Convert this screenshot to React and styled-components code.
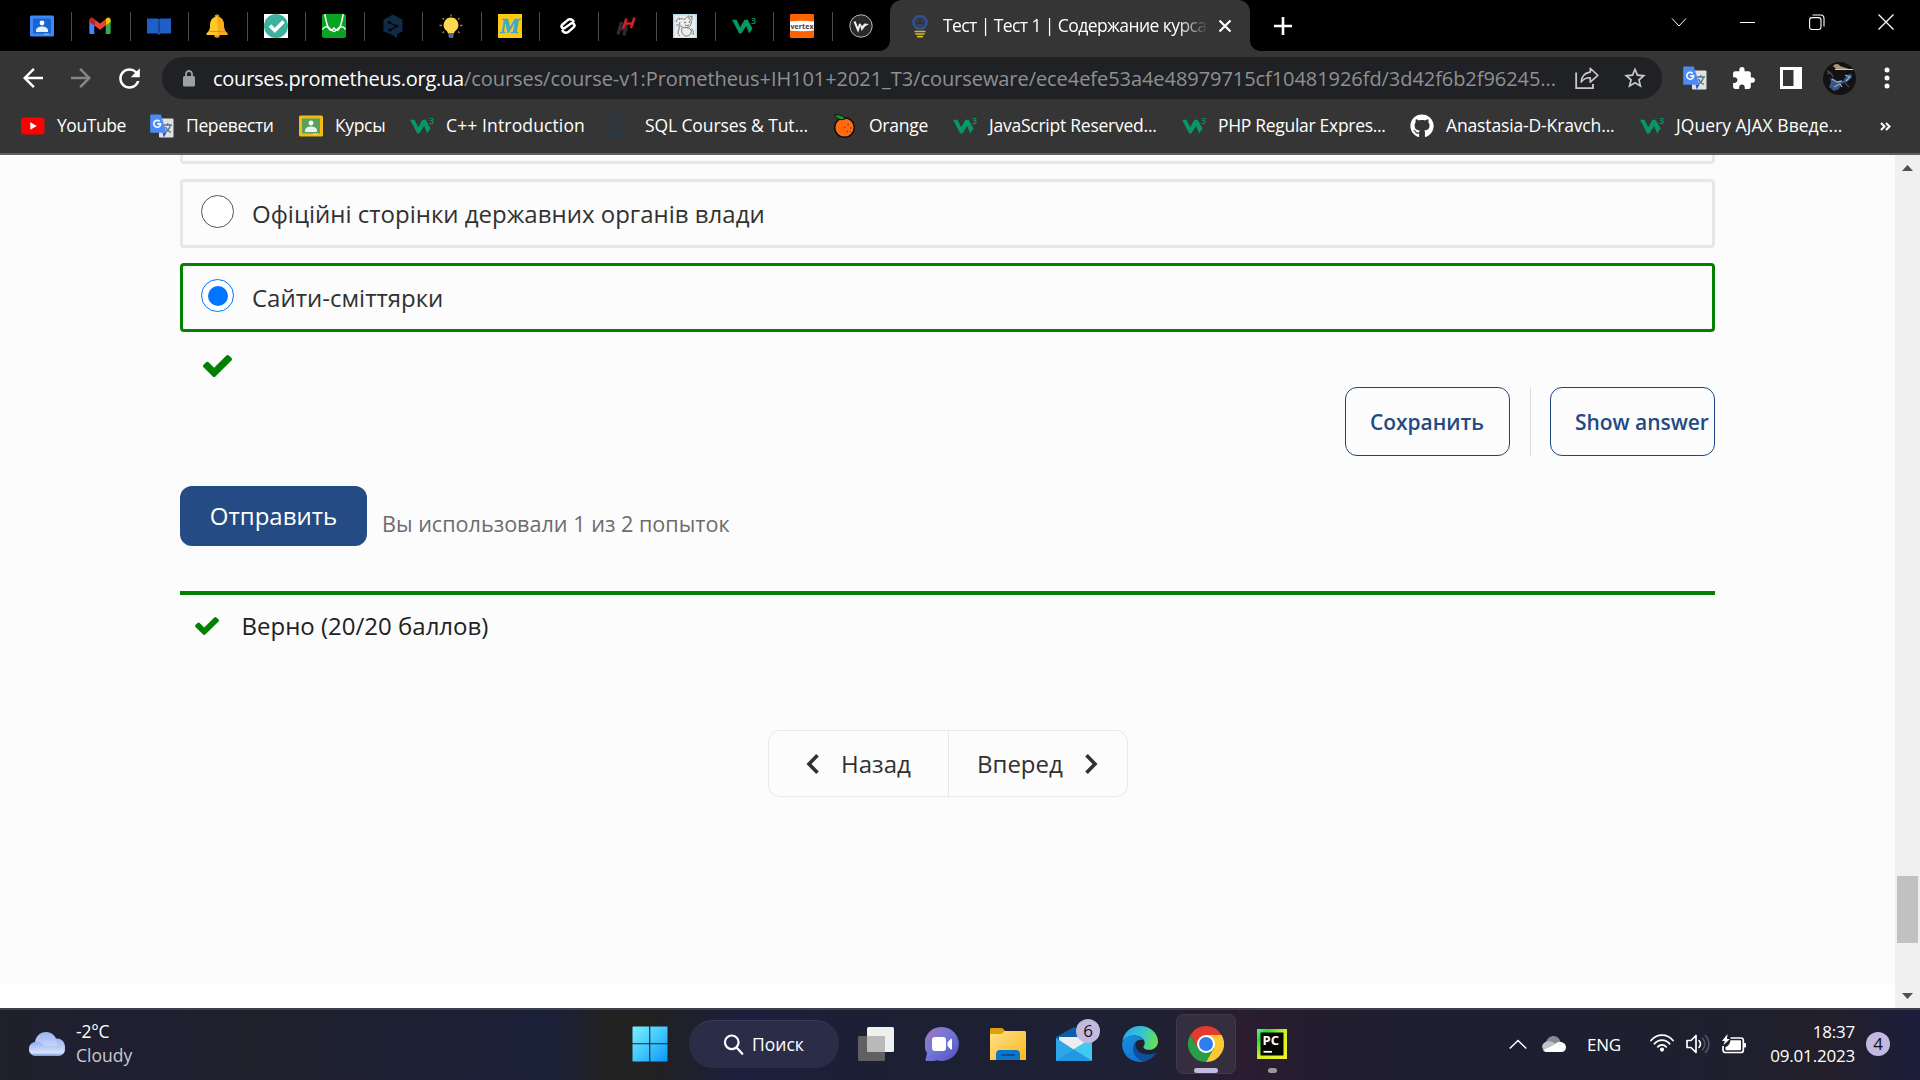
import React from "react";
import styled, { createGlobalStyle } from "styled-components";
import {
  MdArrowBack,
  MdArrowForward,
  MdRefresh,
  MdStarBorder,
  MdExtension,
} from "react-icons/md";
import { FaGithub } from "react-icons/fa";

const Global = createGlobalStyle`
  * { box-sizing: border-box; }
  html, body { margin: 0; padding: 0; background: #fff; }
  body { width: 1920px; height: 1080px; overflow: hidden; }
  svg { display: block; flex: none; }
`;

const Screen = styled.div`
  width: 1920px;
  height: 1080px;
  display: flex;
  flex-direction: column;
  font-family: "Open Sans", "Noto Sans", sans-serif;
`;

/* ---------- browser chrome ---------- */
const TabStrip = styled.div`
  height: 51px;
  background: #000;
  display: flex;
  padding-left: 12.5px;
`;
const PinnedTab = styled.div`
  width: 58.5px;
  height: 51px;
  display: flex;
  align-items: center;
  justify-content: center;
  position: relative;
  &::after {
    content: "";
    position: absolute;
    right: -1px;
    top: 12px;
    width: 1px;
    height: 29px;
    background: ${(p) => (p.$last ? "transparent" : "#4c4c4c")};
  }
`;
const ActiveTab = styled.div`
  width: 360px;
  height: 51px;
  background: #353535;
  border-radius: 12px 12px 0 0;
  display: flex;
  align-items: center;
  padding-left: 18px;
  position: relative;
  &::before, &::after {
    content: "";
    position: absolute;
    bottom: 0;
    width: 10px;
    height: 10px;
  }
  &::before { left: -10px; background: radial-gradient(circle at 0 0, #000 9.5px, #353535 10px); }
  &::after { right: -10px; background: radial-gradient(circle at 100% 0, #000 9.5px, #353535 10px); }
`;
const TabTitle = styled.div`
  margin-left: 11px;
  padding-bottom: 1px;
  width: 263px;
  overflow: hidden;
  white-space: nowrap;
  color: #fff;
  font-size: 17.5px;
  letter-spacing: -0.58px;
  line-height: 24px;
  mask-image: linear-gradient(90deg, #000 89%, transparent 101%);
`;
const TabClose = styled.div`
  margin-left: 12px;
`;
const NewTab = styled.div`
  width: 65px;
  display: flex;
  align-items: center;
  justify-content: center;
`;
const WindowControls = styled.div`
  margin-left: auto;
  height: 43px;
  display: flex;
`;
const WindowButton = styled.div`
  width: 69px;
  display: flex;
  align-items: center;
  justify-content: center;
`;

const Toolbar = styled.div`
  height: 54px;
  background: #353535;
  display: flex;
  align-items: center;
  padding-left: 9px;
`;
const NavButton = styled.div`
  width: 48px;
  display: flex;
  justify-content: center;
  color: ${(p) => (p.$dim ? "#868686" : "#fff")};
`;
const Omnibox = styled.div`
  margin-left: 9px;
  width: 1500px;
  height: 42px;
  border-radius: 21px;
  background: #202124;
  display: flex;
  align-items: center;
  padding: 0 3px 0 21px;
  color: #9aa0a6;
`;
const Url = styled.div`
  margin-left: 18px;
  padding-top: 2px;
  flex: 1;
  min-width: 0;
  font-size: 20px;
  line-height: 28px;
  white-space: nowrap;
  color: #8f9093;
  letter-spacing: -0.06px;
`;
const Domain = styled.span`
  color: #fff;
  letter-spacing: -0.25px;
`;
const OmniIcon = styled.div`
  width: 48px;
  flex: none;
  display: flex;
  justify-content: center;
  color: #c7c7c7;
`;
const ToolIcon = styled.div`
  width: 48px;
  display: flex;
  justify-content: center;
  color: #fff;
`;
const Extensions = styled.div`
  display: flex;
  align-items: center;
  margin-left: 9px;
`;

const Bookmarks = styled.div`
  height: 50px;
  background: #353535;
  border-bottom: 2px solid #5f5f5f;
  padding: 0 0 6px 21px;
  display: flex;
  align-items: center;
`;
const Bookmark = styled.div`
  width: ${(p) => p.$w}px;
  display: flex;
  align-items: center;
  gap: 12px;
  color: #fff;
  font-size: 17.5px;
  line-height: 24px;
  white-space: nowrap;
  letter-spacing: ${(p) => p.$ls}px;
`;
const BookmarkLabel = styled.span`
  padding-bottom: 2px;
`;

/* ---------- page ---------- */
const Viewport = styled.div`
  height: 853px;
  display: flex;
`;
const Page = styled.div`
  width: 1895px;
  height: 830px;
  background: #fcfcfc;
  padding-left: 180px;
  overflow: hidden;
`;
const Problem = styled.div`
  width: 1535px;
  display: flex;
  flex-direction: column;
`;
const Option = styled.div`
  height: 69px;
  flex: none;
  margin-bottom: 15px;
  border: 3px solid ${(p) => (p.$correct ? "#008100" : "#e7e7e7")};
  border-radius: 4px;
  display: flex;
  align-items: center;
  padding-left: 18px;
  font-size: 24px;
  line-height: 36px;
  color: #313131;
`;
const ClippedOption = styled.div`
  height: 9px;
  flex: none;
  margin-bottom: 15px;
  border: 3px solid #e7e7e7;
  border-top: 0;
  border-radius: 0 0 4px 4px;
`;
const Radio = styled.span`
  width: 33px;
  height: 33px;
  border-radius: 50%;
  border: 1px solid ${(p) => (p.$on ? "#0075ff" : "#555")};
  background: #fff;
  margin: 0 18px 4px 0;
  display: flex;
  align-items: center;
  justify-content: center;
  &::after {
    content: "";
    width: 20px;
    height: 20px;
    border-radius: 50%;
    background: ${(p) => (p.$on ? "#0075ff" : "transparent")};
  }
`;
const Mark = styled.div`
  height: 40px;
  padding: 8px 0 0 23px;
`;
const Actions = styled.div`
  display: flex;
  justify-content: flex-end;
  height: 69px;
`;
const OutlineButton = styled.div`
  width: 165px;
  height: 69px;
  border: 1px solid #1c4580;
  border-radius: 12px;
  padding-left: 24px;
  display: flex;
  align-items: center;
  font-size: 21px;
  font-weight: 600;
  color: #234a83;
  white-space: nowrap;
  letter-spacing: -0.05px;
`;
const ActionDivider = styled.div`
  width: 1px;
  margin: 0 19px 0 20px;
  background: #dcdcdc;
`;
const SubmitRow = styled.div`
  margin-top: 30px;
  display: flex;
  height: 60px;
`;
const Submit = styled.div`
  width: 187px;
  height: 60px;
  border-radius: 12px;
  background: #244b83;
  color: #fff;
  font-size: 24px;
  line-height: 59px;
  text-align: center;
`;
const Attempts = styled.div`
  padding: 22px 0 0 15px;
  font-size: 21.6px;
  line-height: 31px;
  color: #6c6c6c;
`;
const Notice = styled.div`
  margin-top: 45px;
  border-top: 4px solid #008100;
  padding: 5px 0 0 15px;
  height: 61px;
  display: flex;
  align-items: center;
  gap: 22.5px;
  font-size: 24px;
  line-height: 36px;
  color: #222;
`;
const Pager = styled.div`
  margin: 78px 0 0 588px;
  width: 360px;
  height: 67px;
  display: flex;
  border: 1px solid #e7e7e7;
  border-radius: 12px;
  color: #313131;
  font-size: 24px;
`;
const PagerButton = styled.div`
  width: 179px;
  display: flex;
  align-items: center;
  padding-left: ${(p) => p.$pad}px;
  gap: 22px;
  & + & { border-left: 1px solid #e7e7e7; }
`;
const Scrollbar = styled.div`
  width: 25px;
  height: 853px;
  background: #f0f0f0;
  display: flex;
  flex-direction: column;
  align-items: center;
  padding: 10px 0 9px;
`;
const Thumb = styled.div`
  width: 21px;
  height: 67px;
  background: #c1c1c1;
  margin: 705px 0 auto;
`;

/* ---------- taskbar ---------- */
const Taskbar = styled.div`
  height: 72px;
  border-top: 2px solid #3e3f4b;
  padding-bottom: 2px;
  display: flex;
  align-items: center;
  color: #fff;
  background: linear-gradient(90deg, #20202b 0, #1f1f33 130px, #1f202c 250px, #1c2036 480px, #1a2038 550px, #222222 605px, #212122 655px, #1b1f3c 740px, #1c2033 900px, #1f2033 1150px, #2b1c31 1245px, #211d2f 1330px, #1d1f31 1450px, #1e1f2f 1700px, #231f2b 1830px, #1c1d3b 1920px);
`;
const Weather = styled.div`
  width: 620px;
  padding-left: 29px;
  display: flex;
  align-items: center;
  gap: 11px;
  font-size: 17.5px;
  line-height: 24px;
`;
const Muted = styled.div`
  color: #c9c9cf;
  letter-spacing: 0;
`;
const WeatherText = styled.div`
  letter-spacing: -0.2px;
  padding-bottom: 3px;
`;
const AppTile = styled.div`
  width: 60px;
  height: 60px;
  margin-right: 6px;
  border-radius: 7px;
  border: 1px solid ${(p) => (p.$active ? "#403b4b" : "transparent")};
  background: ${(p) => (p.$active ? "#352e3e" : "transparent")};
  display: flex;
  align-items: center;
  justify-content: center;
  position: relative;
`;
const Indicator = styled.span`
  position: absolute;
  left: calc(50% - ${(p) => p.$w / 2}px);
  bottom: 0;
  width: ${(p) => p.$w}px;
  height: 5px;
  border-radius: 3px;
  background: ${(p) => p.$c};
`;
const Badge = styled.span`
  width: 24px;
  height: 24px;
  border-radius: 50%;
  background: #c3b9e0;
  color: #111;
  font-size: 17px;
  line-height: 23px;
  text-align: center;
`;
const MailBadge = styled(Badge)`
  position: absolute;
  left: 31px;
  top: 4px;
`;
const Search = styled.div`
  width: 150px;
  height: 48px;
  margin: 0 7px 0 3px;
  border-radius: 24px;
  background: #2b2d48;
  border-top: 1px solid #3a3b54;
  display: flex;
  align-items: center;
  padding: 0 0 1px 34px;
  gap: 8px;
  font-size: 17.5px;
`;
const Tray = styled.div`
  margin-left: auto;
  padding-right: 30px;
  display: flex;
  align-items: center;
  font-size: 17px;
`;
const Language = styled.div`
  width: 63px;
  margin-left: 21px;
  letter-spacing: -0.2px;
`;
const TrayGroup = styled.div`
  display: flex;
  gap: 12px;
  width: 96px;
`;
const OneDriveSlot = styled.div`
  margin-left: 15px;
`;
const Clock = styled.div`
  width: 109px;
  text-align: right;
  line-height: 24px;
  letter-spacing: -0.2px;
  margin-right: 11px;
`;

/* ---------- icons ---------- */
const Svg = ({ s = 24, children, box = "0 0 24 24", w, h }) => (
  <svg width={w || s} height={h || s} viewBox={box} fill="none">
    {children}
  </svg>
);
const Classroom = ({ frame, board }) => (
  <Svg>
    <rect y="1.5" width="24" height="21" rx="1.5" fill={frame} />
    <rect x="3" y="4.5" width="18" height="15" fill={board} />
    <circle cx="12" cy="9" r="2.4" fill="#fff" />
    <path d="M6 18v-1.500c0-2.500 3-4 6-4s6 1.500 6 4V18z" fill="#e9f0f5" />
    <rect x="14" y="19.500" width="5" height="1.500" fill="#fff" opacity=".35" />
  </Svg>
);
const Gmail = () => (
  <Svg>
    <path d="M1.300 6v12.500c0 1 .6 1.500 1.500 1.500H6.300V10z" fill="#4285f4" />
    <path d="M17.700 10v10h3.600c.9 0 1.400-.6 1.400-1.500V6z" fill="#34a853" />
    <path d="M17.700 5.200V11.500l5-3.800V6c0-2.200-2.400-3.300-4-2z" fill="#fbbc04" />
    <path d="M6.300 11.500V5.200L12 9.500l5.700-4.300v6.300L12 15.800z" fill="#ea4335" />
    <path d="M1.300 6v1.700l5 3.800V5.200L5.300 4C3.600 2.800 1.300 3.800 1.300 6z" fill="#c5221f" />
  </Svg>
);
const Book = () => (
  <Svg>
    <path d="M0 4.500h9.500c1.200 0 2.100.5 2.500 1.200.4-.7 1.300-1.200 2.500-1.200H24v15h-9.500c-1 0-1.500.3-2 1h-1c-.5-.7-1-1-2-1H0z" fill="#1f5fc8" />
    <path d="M12 6.500v12" stroke="#0f2f66" strokeWidth="1" />
  </Svg>
);
const Bell = () => (
  <Svg>
    <circle cx="12" cy="21" r="2.800" fill="#f79d10" />
    <path d="M12 .5a2.500 2.500 0 0 1 2.300 2.700C18 4.500 19 8 19 12c0 4 1.500 5.500 3.500 7.500.5.600.2 1.500-.700 1.500H2.200c-.9 0-1.200-.9-.7-1.500C3.500 17.500 5 16 5 12c0-4 1-7.500 4.700-8.800A2.500 2.500 0 0 1 12 .5z" fill="#ffc928" />
    <path d="M12 3c5 0 7 4 7 9 0 4 1.500 5.500 3.500 7.500.5.600.2 1.500-.7 1.500H13z" fill="#fba91c" />
    <path d="M3.500 17.500h17" stroke="#e58e12" strokeWidth="1" />
    <path d="M10.500 3c0-2.500 3-2.500 3 0" stroke="#a86a10" strokeWidth="1" />
  </Svg>
);
const CheckBadge = () => (
  <Svg>
    <rect width="24" height="24" fill="#fff" />
    <circle cx="12" cy="12" r="12" fill="#3cb29e" />
    <path d="M6 11.500l4.800 5L19.500 7.500" stroke="#fff" strokeWidth="3.600" />
  </Svg>
);
const Curves = () => (
  <Svg>
    <rect width="24" height="24" rx="2" fill="#07a321" />
    <path d="M2.800 0C4 7 5.500 13.500 7.500 15.500c1.500 1.600 3 .2 4.500-1.500 1.500 1.700 3 3.100 4.500 1.500 2-2 3.500-8.500 4.700-15.500" stroke="#fff" strokeWidth="1.500" />
    <path d="M.3 15.500C3 11.500 6.500 12.500 9 15.500c2 2.500 4 2.500 6 0 2.500-3 6-4 8.700 0" stroke="#fff" strokeWidth="1.500" />
  </Svg>
);
const DeepL = () => (
  <Svg>
    <path d="M12 .5l9.500 5.300v11.500L16 20.200V24l-5-3.300-8.500-3.400V5.800z" fill="#0f2b46" />
    <path d="M8.500 8.500l7 3.700-6.500 4" stroke="#030a12" strokeWidth="1.300" />
    <circle cx="8.500" cy="8.500" r="1.800" fill="#030a12" />
    <circle cx="15.500" cy="12.200" r="1.800" fill="#030a12" />
    <circle cx="9" cy="16" r="1.800" fill="#030a12" />
  </Svg>
);
const Bulb = () => (
  <Svg>
    <path d="M12 .5v2M3.500 4l1.500 1.500M20.500 4L19 5.500M.5 11.500h2.500M21 11.500h2.500M3.500 19L5 17.500M20.500 19L19 17.500" stroke="#a8842a" strokeWidth="1.400" />
    <path d="M12 3.500a7.500 7.500 0 0 1 4.600 13.300c-.9.800-1.400 1.500-1.600 2.700H9c-.2-1.200-.7-1.900-1.600-2.700A7.500 7.500 0 0 1 12 3.500z" fill="#fcd94e" />
    <path d="M9.500 19.500h5v3L13.500 24h-3l-1-1.500z" fill="#5d6b94" />
  </Svg>
);
const Letter = styled.span`
  width: 24px;
  height: 24px;
  background: #ffc90c;
  color: #3aaad2;
  font: italic 700 22px/24px "Liberation Serif", serif;
  text-align: center;
  -webkit-text-stroke: 0.7px #3aaad2;
`;
const LinkS = () => (
  <Svg>
    <path d="M17.500 7.300C15.800 5 13.200 4.600 11.300 6.400L6.300 10.700C4.300 12.600 6.800 15.600 9 13.800L15 9.600C17.200 8 19.700 11.300 17.700 13.200L12.700 17.600C10.800 19.400 8.200 19 6.500 16.700" stroke="#fff" strokeWidth="2.500" strokeLinecap="round" />
    <path d="M9.500 11.300l4.500-3.400M10 16l4.500-3.400" stroke="#000" strokeWidth=".9" />
  </Svg>
);
const HLogo = () => (
  <Svg>
    <path d="M6.500 8L3 20.500M11.500 10L9 21.500M3.500 15h9" stroke="#2d2d2d" strokeWidth="3.200" />
    <path d="M11.500 4.500L8 14.500M19.500 3.500L16 14M9.500 9.500H19" stroke="#d0202c" strokeWidth="2.500" />
  </Svg>
);
const Sketch = () => (
  <Svg>
    <rect width="24" height="24" fill="#b9dded" />
    <rect x="1.500" y="1.500" width="21" height="22" fill="#eceeee" />
    <path d="M6 6c2-3 4 0 6-1s3-4 4-3l0 3c3 0 3 5 1 7s-6 2-8 1-3-2-2-5M17 3l2-1v4M3 11c2-1 4 1 3 4s-2 5 1 7M9 14c-1 3 0 6 3 8M14 14c3 0 5 2 4 5s-4 3-6 3M18 15c2 0 3 3 2 6M3 8c1-3 2-4 4-4" stroke="#74787a" strokeWidth="1" />
    <circle cx="12" cy="8.500" r=".8" fill="#4d5255" />
    <circle cx="16.500" cy="8" r=".8" fill="#4d5255" />
    <path d="M12 11c1.500 1 3 .5 4-.5" stroke="#4d5255" strokeWidth=".8" />
  </Svg>
);
const SvgText = styled.text`
  font-family: "Open Sans", sans-serif;
  font-weight: ${(p) => p.$weight || 400};
`;
const W3 = () => (
  <Svg>
    <path d="M0 5.800h4.600l3.600 7.400 2.500-4.500L12.500 5.800h3.200L20.500 14.600 17.200 19.400l-3-7.400-4.800 7.400H7.200z" fill="#059862" />
    <SvgText x="19" y="10" fontSize="9" $weight={600} fill="#059862">3</SvgText>
  </Svg>
);
const Vertex = () => (
  <Svg>
    <rect width="24" height="24" rx="1" fill="#ff6200" />
    <path d="M0 7.500c8-1 16-1 24 0v9c-8 1-16 1-24 0z" fill="#fff" />
    <SvgText x="0.500" y="14.500" fontSize="7" $weight={700} fill="#503530" textLength="23">vertex</SvgText>
  </Svg>
);
const RoundLogo = () => (
  <Svg>
    <circle cx="12" cy="12" r="11.200" fill="#28292a" stroke="#b8b8b8" strokeWidth="1" />
    <path d="M5.500 7.500L9 16l2-6" stroke="#f4f4f4" strokeWidth="2" />
    <path d="M10.500 8.500L13 12l2.500-2.500L20 10l-4 2.500L12.500 17z" fill="#f0f0f0" />
  </Svg>
);
const Prometheus = () => (
  <Svg>
    <circle cx="12" cy="8.500" r="6.400" stroke="#2d5098" strokeWidth="2.800" />
    <path d="M9.500 6.500v1.500M14.500 6.500v1.500M9.300 10.500c1.500 1.300 3.900 1.300 5.400 0" stroke="#2d5098" strokeWidth="1.200" />
    <path d="M6.500 17.500h11M7.300 20h9.400M9 22.700h6" stroke="#d8b71c" strokeWidth="1.700" />
  </Svg>
);
const YouTube = () => (
  <Svg>
    <rect y="3.500" width="23.500" height="17" rx="3.500" fill="#f00" />
    <path d="M9.300 8.300l6.500 3.700-6.500 3.700z" fill="#fff" />
  </Svg>
);
const Translate = () => (
  <Svg>
    <rect x="9" y="4.500" width="14.500" height="19" rx="1.200" fill="#dfe1e3" />
    <path d="M13.500 11h8.500M17.700 9v2M20.500 11c-1 4-3 6-5.500 7.500M15.500 13c1 2.500 3 4.500 5.500 5.500" stroke="#5b7480" strokeWidth="1.300" />
    <path d="M12.500 18.500h4L13.800 23.500z" fill="#2b4ecb" />
    <path d="M1.200.5h9.600L16.500 18.800H1.200C.6 18.800.2 18.400.2 17.700V1.600C.2.900.6.500 1.200.5z" fill="#4c8bf5" />
    <path d="M9.700 7.500A3.400 3.400 0 1 0 10.600 9.900H7.300" stroke="#fff" strokeWidth="1.600" />
  </Svg>
);
const CodeC = () => (
  <Svg>
    <rect x="1" y="3" width="13.500" height="17.500" stroke="#1c3e58" strokeWidth="1.200" />
    <path d="M10.300 9.200C7.500 7.500 5 9 5 12s2.500 4.500 5.300 2.800M18.500 21H24" stroke="#1c3e58" strokeWidth="1.400" />
  </Svg>
);
const Orange = () => (
  <Svg>
    <circle cx="11.500" cy="13.500" r="9.800" fill="#ff6a13" stroke="#0c0c0c" strokeWidth="1.500" />
    <path d="M1.500.8c5-.3 9 .5 10.500 4.200-4 1.500-8 .5-10.500-4.200z" fill="#159a1c" stroke="#0c0c0c" strokeWidth="1" />
    <path d="M11 13.500h1.500M14.500 10.500h1.500M17 14h1.500M13.500 17.500h1.500M17 17.500h1" stroke="#a63c06" strokeWidth="1.300" />
  </Svg>
);
const Lock = () => (
  <svg width="12" height="17" viewBox="0 0 12 17" fill="none">
    <path d="M3 7V4.200C3 2.500 4.300 1 6 1s3 1.500 3 3.200V7" stroke="#9aa0a6" strokeWidth="1.800" />
    <rect y="6" width="12" height="10.500" rx="1.500" fill="#9aa0a6" />
  </svg>
);
const Tick = ({ w, h }) => (
  <svg width={w} height={h} viewBox="121 334 1550 1188" preserveAspectRatio="none" fill="#008100">
    <path d="M1671 566q0 40-28 68l-724 724-136 136q-28 28-68 28t-68-28l-136-136-362-362q-28-28-28-68t28-68l136-136q28-28 68-28t68 28l294 295 656-657q28-28 68-28t68 28l136 136q28 28 28 68z" />
  </svg>
);
const Share = () => (
  <Svg s={26}>
    <path d="M2 7v14.300h15.500V17.500" stroke="currentColor" strokeWidth="1.700" />
    <path d="M15 3l7 6.500-7 6.300v-4c-4-.2-6.300 1-8.300 4 .3-5.300 3-8.600 8.300-9.200z" stroke="currentColor" strokeWidth="1.500" strokeLinejoin="round" />
  </Svg>
);
const Avatar = () => (
  <Svg s={33} box="0 0 33 33">
    <circle cx="16.500" cy="16.500" r="16.500" fill="#121214" />
    <path d="M10 4c3-3 6-2 7 0l9 3-12 1zM12 8l3-3 4 2" fill="#a89670" />
    <path d="M12 7.500h18" stroke="#cfcfcf" strokeWidth="1" />
    <path d="M7 16l4 1 3 3 6-1 4-6 4-1 1 3-5 5-6 2-2 5-5 2-5-4 2-5z" fill="#3c5684" />
    <path d="M9 17l5 3 5-1M22 13l5 2-4 4M11 25l6-3 2 3" stroke="#8fa9d0" strokeWidth="1.300" />
    <path d="M4 12c3-2 5 0 6 3M22 21l4 4M4 9l4 2" stroke="#4c4238" strokeWidth="1.500" />
  </Svg>
);
const WeatherCloud = () => (
  <svg width="36" height="24" viewBox="0 0 36 24">
    <defs>
      <linearGradient id="wc" x1="0" y1="0" x2="0" y2="1">
        <stop offset="0" stopColor="#88a9ee" />
        <stop offset=".75" stopColor="#d9e4fb" />
        <stop offset="1" stopColor="#7199ea" />
      </linearGradient>
      <linearGradient id="wc2" x1="0" y1="0" x2="0" y2="1">
        <stop offset="0" stopColor="#9ab4f0" />
        <stop offset="1" stopColor="#dde7fb" />
      </linearGradient>
    </defs>
    <rect x="0" y="10" width="36" height="14" rx="7" fill="url(#wc)" />
    <circle cx="28" cy="14.500" r="8" fill="url(#wc2)" />
    <circle cx="17" cy="11" r="11" fill="url(#wc2)" />
    <path d="M0 17c0-9 12-9 16-3h12l8 2c0 5-3 8-7 8H7c-4 0-7-3-7-7z" fill="url(#wc)" opacity=".75" />
  </svg>
);
const WindowsLogo = () => (
  <svg width="36" height="36" viewBox="0 0 36 36">
    <defs>
      <linearGradient id="win" gradientUnits="userSpaceOnUse" x1="0" y1="0" x2="36" y2="36">
        <stop offset="0" stopColor="#7cf0ff" />
        <stop offset=".5" stopColor="#42c8fb" />
        <stop offset="1" stopColor="#0a93fb" />
      </linearGradient>
    </defs>
    <path d="M1.500.5H17.200V17.200H.5V1.500c0-.6.400-1 1-1zM18.300.5H34.500c.6 0 1 .4 1 1V17.200H18.300zM.5 18.300H17.200V35.500H1.500c-.6 0-1-.4-1-1zM18.300 18.300H35.500V34.500c0 .6-.4 1-1 1H18.300z" fill="url(#win)" />
  </svg>
);
const SearchIcon = () => (
  <Svg s={21}>
    <circle cx="10" cy="9.500" r="7.800" stroke="#fff" strokeWidth="2.500" />
    <path d="M15.500 15.500L22 22.500" stroke="#fff" strokeWidth="2.600" strokeLinecap="round" />
  </Svg>
);
const TaskView = () => (
  <svg width="36" height="34" viewBox="0 0 36 34">
    <rect x="9" width="27" height="25" rx="1.500" fill="#f0f0f0" />
    <rect y="9" width="27" height="25" rx="1.500" fill="#606062" />
    <rect x="9" y="9" width="18" height="16" fill="#b9b9b9" />
  </svg>
);
const Chat = () => (
  <svg width="34" height="34" viewBox="0 0 34 34">
    <defs>
      <linearGradient id="chat" x1="0" y1="0" x2="1" y2="1">
        <stop offset="0" stopColor="#a577b8" />
        <stop offset=".45" stopColor="#7377d8" />
        <stop offset="1" stopColor="#5152bd" />
      </linearGradient>
    </defs>
    <path d="M17 0a17 17 0 1 1-5 33.300c-3 1-7 .9-10.500.7-1-.1-1.400-.8-1-1.600L2 26A17 17 0 0 1 17 0z" fill="url(#chat)" />
    <rect x="7" y="10" width="14" height="14" rx="3" fill="#fff" />
    <path d="M22.500 15.500l3-3.500c.7-.6 1.500-.3 1.500.6v9c0 .9-.8 1.200-1.500.6l-3-3.200z" fill="#fff" />
  </svg>
);
const Folder = () => (
  <svg width="36" height="32" viewBox="0 0 36 32">
    <defs>
      <linearGradient id="fold" x1="0" y1="0" x2="1" y2="1">
        <stop offset="0" stopColor="#ffe08a" />
        <stop offset="1" stopColor="#fbb81c" />
      </linearGradient>
    </defs>
    <path d="M0 1.500C0 .6.600 0 1.500 0h10c.8 0 1.300.3 1.800.9L15 3v5H0z" fill="#e0a008" />
    <path d="M0 6h11.500l3-3h20c.9 0 1.500.6 1.500 1.500V32H0z" fill="url(#fold)" />
    <path d="M6 32v-6c0-2.500 1.500-4 4-4h16c2.500 0 4 1.500 4 4v6z" fill="#0a76cc" />
    <path d="M11 27h14" stroke="#0a4c91" strokeWidth="1.800" />
  </svg>
);
const Mail = () => (
  <svg width="36" height="34" viewBox="0 0 36 34">
    <path d="M0 10L18 0l18 10v5H0z" fill="#0d5ca8" />
    <path d="M3 10h30v10L18 27 3 18z" fill="#eeeeee" />
    <path d="M0 11l20 13 16 10H1c-.6 0-1-.4-1-1z" fill="#2ea6e8" />
    <path d="M36 11L17 22.500 36 34z" fill="#43c8f4" />
    <path d="M0 34l18-11.500L36 34z" fill="#2297e2" />
  </svg>
);
const Edge = () => (
  <svg width="36" height="36" viewBox="0 0 36 36">
    <defs>
      <linearGradient id="eg" x1="0" y1=".3" x2="1" y2=".5">
        <stop offset="0" stopColor="#2aa8e8" />
        <stop offset=".55" stopColor="#35c6cf" />
        <stop offset="1" stopColor="#69e04f" />
      </linearGradient>
      <linearGradient id="eb" x1="0" y1="0" x2=".6" y2="1">
        <stop offset="0" stopColor="#1c8fdc" />
        <stop offset="1" stopColor="#0877d2" />
      </linearGradient>
    </defs>
    <path d="M.3 16C1.500 6 9 0 18 0c10.500 0 18 7.500 18 15.500 0 5-3.800 8.300-8.500 8.300-4.300 0-6.500-1.800-6-3.300.8-1.300 1.200-2.200 1.200-3.500C22.700 12 17 9.500 12 9.500 6.500 9.500 2 12.500.3 16z" fill="url(#eg)" />
    <path d="M.2 17C1.500 12.500 6.500 9.500 12 9.500c5 0 8.500 2.500 10 5-7-3-11.500 3.500-9 10C14.800 30 20 34.500 24 34.800 21 36 18 36 18 36 7.500 36-.7 27.500.2 17z" fill="url(#eb)" />
    <path d="M14 15.800C9 20 10 30.500 20 35.500c6-.1 11.500-3.700 14-9-3 1.500-6 2.200-9.500 1.800C17 27.500 12 22.500 14 15.800z" fill="#0e4f99" />
  </svg>
);
const Chrome = () => (
  <svg width="36" height="36" viewBox="-18 -18 36 36">
    <path d="M0-9H15.600A18 18 0 0 0-15.600-9L-7.800 4.500z" fill="#e33b2e" />
    <path d="M-7.800 4.500L-15.600-9A18 18 0 0 0 0 18L7.800 4.500z" fill="#2b9c48" />
    <path d="M7.800 4.500L0 18A18 18 0 0 0 15.600-9H0z" fill="#fcc934" />
    <circle r="9" fill="#fff" />
    <circle r="7" fill="#2f7cf0" />
  </svg>
);
const PyCharm = () => (
  <svg width="30" height="30" viewBox="0 0 30 30">
    <defs>
      <linearGradient id="pc" x1="0" y1="0" x2="1" y2="1">
        <stop offset="0" stopColor="#5df5a0" />
        <stop offset=".2" stopColor="#29dc35" />
        <stop offset=".5" stopColor="#d2ef28" />
        <stop offset="1" stopColor="#f4f02b" />
      </linearGradient>
    </defs>
    <rect width="30" height="30" fill="url(#pc)" />
    <rect x="3.500" y="3.500" width="23" height="23" fill="#050805" />
    <path d="M6.500 22.800H15" stroke="#fff" strokeWidth="1.800" />
    <SvgText x="5.500" y="15.500" fontSize="12.500" $weight={700} fill="#fff" textLength="16.500" lengthAdjust="spacingAndGlyphs">PC</SvgText>
  </svg>
);
const OneDrive = () => (
  <svg width="24" height="16" viewBox="0 0 24 16">
    <path d="M4 6c1.500-5 7-7.500 11-5 2 1.200 3 3 3.500 5L12 10z" fill="#8a8a92" />
    <path d="M5 5.500c3-.8 5 0 7.500 2L16 10 3 15C-1.500 12.500-.5 6.500 5 5.500z" fill="#c4c4c8" />
    <path d="M17 6c4-.5 7 2 7 5.200 0 3-2 4.800-4.800 4.800H5c-2 0-3-.6-4-1.800L12 9c1.500-1.500 3-2.800 5-3z" fill="#fff" />
  </svg>
);
const Wifi = () => (
  <svg width="24" height="18" viewBox="0 0 24 18" fill="none" stroke="#fff" strokeWidth="1.800" strokeLinecap="round">
    <path d="M1 6.500C7-.6 17-.6 23 6.500M4.500 9.700c4.200-4.800 10.800-4.800 15 0M7.800 12.800c2.400-2.700 6-2.700 8.400 0" />
    <circle cx="12" cy="15.600" r="1.200" fill="#fff" />
  </svg>
);
const Speaker = () => (
  <svg width="24" height="20" viewBox="0 0 24 20" fill="none" strokeLinejoin="round" strokeLinecap="round">
    <path d="M1 6.500h4L10 1.500v17l-5-5H1z" stroke="#fff" strokeWidth="1.700" />
    <path d="M13 6.500c1.700 2 1.700 5 0 7" stroke="#fff" strokeWidth="1.600" />
    <path d="M16.500 4c3 3.500 3 8.500 0 12M19.500 1.500c4.500 5 4.500 12 0 17" stroke="#54556a" strokeWidth="1.600" />
  </svg>
);
const Battery = () => (
  <svg width="24" height="20" viewBox="0 0 24 20" fill="none">
    <path d="M8.500 4H19c1.500 0 2.300.8 2.300 2.300v9.900c0 1.500-.8 2.300-2.300 2.300H3.500C2 18.500 1 17.500 1 16v-4" stroke="#fff" strokeWidth="1.700" />
    <path d="M8.500 6.300H18c.6 0 1 .4 1 1V15.200c0 .6-.4 1-1 1H4.500c-.6 0-1-.4-1-1V13C6 12.500 8 10 8.500 6.300z" fill="#fff" />
    <path d="M22 9h1c.6 0 1 .5 1 1v2.500c0 .6-.4 1-1 1h-1z" fill="#fff" />
    <path d="M5.500 0L0 7h2.800L1.500 11 8 5H5z" fill="#fff" />
  </svg>
);
const Chevron = ({ right }) => (
  <svg width="13" height="20" viewBox="0 0 13 20" fill="none" stroke="#313131" strokeWidth="3.600">
    <path d={right ? "M1.500 1.300L10 10l-8.500 8.700" : "M11.500 1.300L3 10l8.500 8.700"} />
  </svg>
);
const Triangle = ({ down }) => (
  <svg width="11" height="6" viewBox="0 0 11 6" fill="#505050">
    <path d={down ? "M0 0h11L5.500 6z" : "M0 6h11L5.500 0z"} />
  </svg>
);
const Line = ({ d, w = 16, h = 16, sw = 1.2 }) => (
  <svg width={w} height={h} viewBox={`0 0 ${w} ${h}`} fill="none" stroke="#fff" strokeWidth={sw}>
    <path d={d} />
  </svg>
);

const pinned = [
  <Classroom frame="#4285f4" board="#1765cf" />,
  <Gmail />, <Book />, <Bell />, <CheckBadge />, <Curves />, <DeepL />, <Bulb />,
  <Letter>M</Letter>, <LinkS />, <HLogo />, <Sketch />, <W3 />, <Vertex />, <RoundLogo />,
];

const bookmarks = [
  ["YouTube", <YouTube />, 129, -0.42],
  ["Перевести", <Translate />, 149, -0.35],
  ["Курсы", <Classroom frame="#f5ba15" board="#57a15c" />, 111, -0.35],
  ["C++ Introduction", <W3 />, 199, 0.13],
  ["SQL Courses & Tut...", <CodeC />, 224, -0.11],
  ["Orange", <Orange />, 120, -0.25],
  ["JavaScript Reserved...", <W3 />, 229, -0.24],
  ["PHP Regular Expres...", <W3 />, 228, -0.3],
  ["Anastasia-D-Kravch...", <FaGithub size={24} />, 230, -0.14],
  ["JQuery AJAX Введе...", <W3 />, 240, 0.04],
];

export default function App() {
  return (
    <Screen>
      <Global />
      <TabStrip>
        {pinned.map((icon, i) => (
          <PinnedTab key={i} $last={i === pinned.length - 1}>{icon}</PinnedTab>
        ))}
        <ActiveTab>
          <Prometheus />
          <TabTitle>Тест | Тест 1 | Содержание курса</TabTitle>
          <TabClose><Line d="M1.500 1.500l11 11M12.500 1.500l-11 11" w={14} h={14} sw={2.2} /></TabClose>
        </ActiveTab>
        <NewTab><Line d="M9 0v18M0 9h18" w={18} h={18} sw={2.6} /></NewTab>
        <WindowControls>
          <WindowButton><Line d="M1 4.500l7 7.500 7-7.500" sw={1} /></WindowButton>
          <WindowButton><Line d="M0 8.500h15" sw={1} /></WindowButton>
          <WindowButton><Line d="M3 3.600H9.500Q12 3.600 12 6V13Q12 15.500 9.500 15.500H3Q.6 15.500 .6 13V6Q.6 3.600 3 3.600zM3.500 1h8q3.500 0 3.500 3.500v8" sw={1.1} /></WindowButton>
          <WindowButton><Line d="M.5 .5l15 15M15.500 .5l-15 15" sw={1.3} /></WindowButton>
        </WindowControls>
      </TabStrip>

      <Toolbar>
        <NavButton><MdArrowBack size={30} /></NavButton>
        <NavButton $dim><MdArrowForward size={30} /></NavButton>
        <NavButton><MdRefresh size={31} /></NavButton>
        <Omnibox>
          <Lock />
          <Url>
            <Domain>courses.prometheus.org.ua</Domain>
            /courses/course-v1:Prometheus+IH101+2021_T3/courseware/ece4efe53a4e48979715cf10481926fd/3d42f6b2f96245...
          </Url>
          <OmniIcon><Share /></OmniIcon>
          <OmniIcon><MdStarBorder size={26} /></OmniIcon>
        </Omnibox>
        <Extensions>
          <ToolIcon><Translate /></ToolIcon>
          <ToolIcon><MdExtension size={25} /></ToolIcon>
          <ToolIcon>
            <svg width="22" height="22" viewBox="0 0 22 22" fill="#fff">
              <path fillRule="evenodd" d="M0 0h22v22H0zM3 3v16h10.500V3z" />
            </svg>
          </ToolIcon>
          <ToolIcon><Avatar /></ToolIcon>
          <ToolIcon>
            <svg width="6" height="22" viewBox="0 0 6 22" fill="#fff">
              <circle cx="3" cy="3" r="2.500" /><circle cx="3" cy="11" r="2.500" /><circle cx="3" cy="19" r="2.500" />
            </svg>
          </ToolIcon>
        </Extensions>
      </Toolbar>

      <Bookmarks>
        {bookmarks.map(([label, icon, w, ls]) => (
          <Bookmark key={label} $w={w} $ls={ls}>{icon}<BookmarkLabel>{label}</BookmarkLabel></Bookmark>
        ))}
        <Line d="M1 1l3.500 3.500L1 8M6 1l3.500 3.500L6 8" w={11} h={9} sw={2} />
      </Bookmarks>

      <Viewport>
        <Page>
          <Problem>
            <ClippedOption />
            <Option><Radio />Офіційні сторінки державних органів влади</Option>
            <Option $correct><Radio $on />Сайти-сміттярки</Option>
            <Mark><Tick w={29} h={22} /></Mark>
            <Actions>
              <OutlineButton>Сохранить</OutlineButton>
              <ActionDivider />
              <OutlineButton>Show answer</OutlineButton>
            </Actions>
            <SubmitRow>
              <Submit>Отправить</Submit>
              <Attempts>Вы использовали 1 из 2 попыток</Attempts>
            </SubmitRow>
            <Notice><Tick w={24} h={18} />Верно (20/20 баллов)</Notice>
            <Pager>
              <PagerButton $pad={37}><Chevron />Назад</PagerButton>
              <PagerButton $pad={28}>Вперед<Chevron right /></PagerButton>
            </Pager>
          </Problem>
        </Page>
        <Scrollbar>
          <Triangle />
          <Thumb />
          <Triangle down />
        </Scrollbar>
      </Viewport>

      <Taskbar>
        <Weather>
          <WeatherCloud />
          <WeatherText>-2°C<Muted>Cloudy</Muted></WeatherText>
        </Weather>
        <AppTile><WindowsLogo /></AppTile>
        <Search><SearchIcon />Поиск</Search>
        <AppTile><TaskView /></AppTile>
        <AppTile><Chat /></AppTile>
        <AppTile><Folder /></AppTile>
        <AppTile><Mail /><MailBadge>6</MailBadge></AppTile>
        <AppTile><Edge /></AppTile>
        <AppTile $active><Chrome /><Indicator $w={24} $c="#c3b9e0" /></AppTile>
        <AppTile><PyCharm /><Indicator $w={9} $c="#9a959f" /></AppTile>
        <Tray>
          <Line d="M.7 9.500L9 1.500l8.300 8" w={18} h={11} sw={1.5} />
          <OneDriveSlot><OneDrive /></OneDriveSlot>
          <Language>ENG</Language>
          <TrayGroup><Wifi /><Speaker /><Battery /></TrayGroup>
          <Clock>18:37<br />09.01.2023</Clock>
          <Badge>4</Badge>
        </Tray>
      </Taskbar>
    </Screen>
  );
}
